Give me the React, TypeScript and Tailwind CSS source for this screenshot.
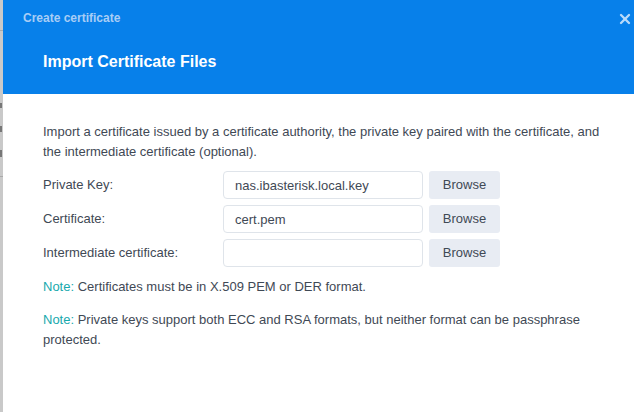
import { X } from 'lucide-react'

const fileRows = [
  { label: 'Private Key:', value: 'nas.ibasterisk.local.key' },
  { label: 'Certificate:', value: 'cert.pem' },
  { label: 'Intermediate certificate:', value: '' },
]

const FileRow = ({ label, value }: { label: string; value: string }) => (
  <div className="flex items-center">
    <label className="w-[180px] shrink-0">{label}</label>
    <input
      readOnly
      value={value}
      className="h-[28px] w-[200px] rounded-[4px] border border-[#dfe4ea] bg-white px-[11px] text-[#3f4955] outline-none"
    />
    <button className="ml-[6px] h-[28px] w-[71px] rounded-[3px] bg-[#e8ecf3] text-[#3f4955]">
      Browse
    </button>
  </div>
)

// sliver of the page behind the dialog
const Backdrop = () => (
  <div className="flex w-[3px] shrink-0 flex-col bg-[#c9c9c9]">
    <div className="mt-[30px] h-px bg-[#aaa]" />
    <div className="ml-0 mt-[72px] h-[5px] w-[2px] bg-[#777]" />
    <div className="mt-[18px] h-[6px] w-[2px] bg-[#777]" />
    <div className="mt-[18px] h-[7px] w-[2px] bg-[#777]" />
    <div className="mt-[19px] h-px bg-[#aaa]" />
  </div>
)

export default function App() {
  return (
    <div className="flex h-[412px] w-[634px] overflow-hidden font-['Liberation_Sans',Arial,sans-serif]">
      <Backdrop />
      <div className="flex flex-1 flex-col bg-white">
        <div className="relative h-[94px] bg-[#0780ea]">
          <div className="pl-[20px] pt-[10px] text-[12px] font-bold leading-[16px] text-[#a8cdf6]">
            Create certificate
          </div>
          <button className="absolute right-[1px] top-[11px] text-[#b9dafa]">
            <X className="size-[16px]" strokeWidth={3.5} />
          </button>
          <h1 className="pl-[40px] pt-[26px] text-[16px] font-bold leading-[20px] text-white">
            Import Certificate Files
          </h1>
        </div>
        <div className="flex flex-col pl-[40px] pr-[20px] pt-[28px] text-[13px] leading-[20px] text-[#3f4955]">
          <p>
            Import a certificate issued by a certificate authority, the private key paired with the certificate, and
            the intermediate certificate (optional).
          </p>
          <div className="mt-[9px] flex flex-col gap-[6px]">
            {fileRows.map((row) => (
              <FileRow key={row.label} {...row} />
            ))}
          </div>
          <p className="mt-[10px]">
            <span className="text-[#17a9ad]">Note:</span> Certificates must be in X.509 PEM or DER format.
          </p>
          <p className="mt-[13px]">
            <span className="text-[#17a9ad]">Note:</span> Private keys support both ECC and RSA formats, but neither
            format can be passphrase protected.
          </p>
        </div>
      </div>
    </div>
  )
}
